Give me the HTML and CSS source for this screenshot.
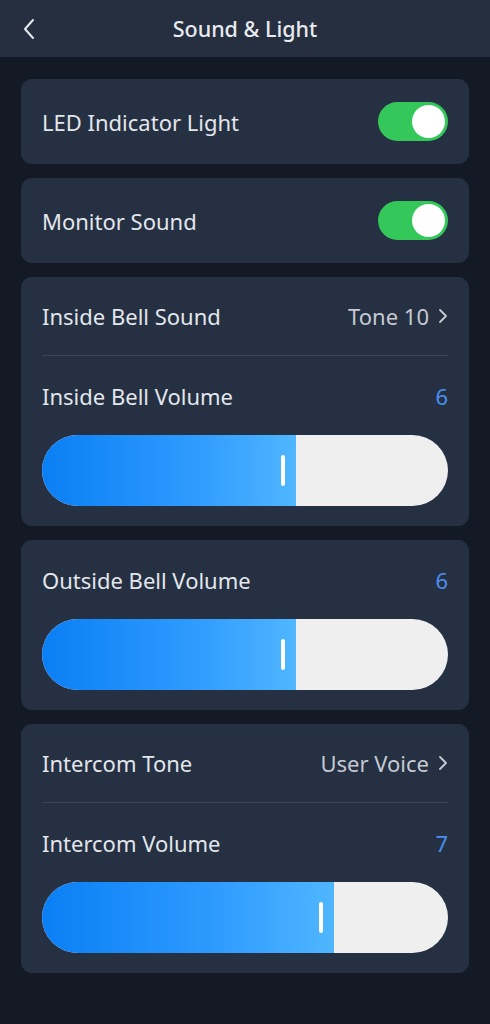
FILE: index.html
```html
<!DOCTYPE html>
<html lang="en">
<head>
    <meta charset="UTF-8">
    <meta name="viewport" content="width=device-width, initial-scale=1.0">
    <title>Sound &amp; Light</title>
    <link rel="stylesheet" href="styles.css">
</head>
<body>
    <header class="topbar">
        <a href="#" class="back">
            <svg width="14" height="22" viewBox="0 0 14 22"><path d="M11 2 L3 11 L11 20" fill="none" stroke="#e6e9ee" stroke-width="2" stroke-linecap="round" stroke-linejoin="round"/></svg>
        </a>
        <h1>Sound &amp; Light</h1>
    </header>

    <div class="container">
        <!-- toggles -->
        <section class="card">
            <div class="row toggle-row">
                <span class="label">LED Indicator Light</span>
                <span class="switch on"><span class="knob"></span></span>
            </div>
        </section>
        <section class="card">
            <div class="row toggle-row">
                <span class="label">Monitor Sound</span>
                <span class="switch on"><span class="knob"></span></span>
            </div>
        </section>

        <!-- inside bell -->
        <section class="card">
            <div class="row link-row">
                <span class="label">Inside Bell Sound</span>
                <span class="value">Tone 10
                    <svg class="chev" width="10" height="16" viewBox="0 0 10 16"><path d="M2 2 L8 8 L2 14" fill="none" stroke="#c5cad2" stroke-width="1.8" stroke-linecap="round" stroke-linejoin="round"/></svg>
                </span>
            </div>
            <div class="divider"></div>
            <div class="row label-row">
                <span class="label">Inside Bell Volume</span>
                <span class="num">6</span>
            </div>
            <div class="slider">
                <div class="fill" style="width: 62.5%"><span class="thumb"></span></div>
            </div>
        </section>

        <!-- outside bell -->
        <section class="card">
            <div class="row label-row">
                <span class="label">Outside Bell Volume</span>
                <span class="num">6</span>
            </div>
            <div class="slider">
                <div class="fill" style="width: 62.5%"><span class="thumb"></span></div>
            </div>
        </section>

        <!-- intercom -->
        <section class="card">
            <div class="row link-row">
                <span class="label">Intercom Tone</span>
                <span class="value">User Voice
                    <svg class="chev" width="10" height="16" viewBox="0 0 10 16"><path d="M2 2 L8 8 L2 14" fill="none" stroke="#c5cad2" stroke-width="1.8" stroke-linecap="round" stroke-linejoin="round"/></svg>
                </span>
            </div>
            <div class="divider"></div>
            <div class="row label-row">
                <span class="label">Intercom Volume</span>
                <span class="num">7</span>
            </div>
            <div class="slider">
                <div class="fill" style="width: 72%"><span class="thumb"></span></div>
            </div>
        </section>
    </div>
</body>
</html>
```

FILE: styles.css
```css
body {
    font-family: "Noto Sans", "Open Sans", sans-serif;
    background-color: #131a25;
    color: #e6e9ee;
    margin: 0;
}
.topbar {
    background-color: #252f40;
    height: 57px;
    display: flex;
    align-items: center;
    justify-content: center;
    position: relative;
}
.topbar h1 {
    margin: 0;
    font-size: 21.5px;
    font-weight: 500;
    color: #e8ebf0;
}
.back {
    position: absolute;
    left: 22px;
    top: 18px;
    display: flex;
}
.container {
    padding: 22px 21px;
    display: flex;
    flex-direction: column;
    gap: 14px;
}
.card {
    background-color: #253042;
    border-radius: 11px;
    padding: 0 21px;
}
.row {
    display: flex;
    align-items: center;
    justify-content: space-between;
}
.label {
    font-size: 22px;
    color: #e3e6eb;
}
.toggle-row {
    height: 85px;
}
.link-row {
    height: 78px;
}
.label-row {
    height: 79px;
}
.value {
    font-size: 22px;
    color: #c5cad2;
    display: flex;
    align-items: center;
    gap: 9px;
}
.num {
    font-size: 22px;
    color: #4a8ef0;
}
.divider {
    height: 1px;
    background-color: #3a4558;
}
.switch {
    width: 70px;
    height: 39px;
    border-radius: 20px;
    background-color: #34c759;
    display: flex;
    align-items: center;
    justify-content: flex-end;
    padding: 0 3px;
    box-sizing: border-box;
}
.knob {
    width: 33px;
    height: 33px;
    border-radius: 50%;
    background-color: #fff;
}
.slider {
    height: 71px;
    border-radius: 36px;
    background-color: #efefef;
    overflow: hidden;
    margin-bottom: 20px;
}
.fill {
    height: 100%;
    background: linear-gradient(to right, #0a7ff4, #2f9bff 60%, #4fb6ff);
    display: flex;
    align-items: center;
    justify-content: flex-end;
}
.thumb {
    width: 4px;
    height: 31px;
    border-radius: 2px;
    background-color: #fff;
    margin-right: 11px;
}
```
